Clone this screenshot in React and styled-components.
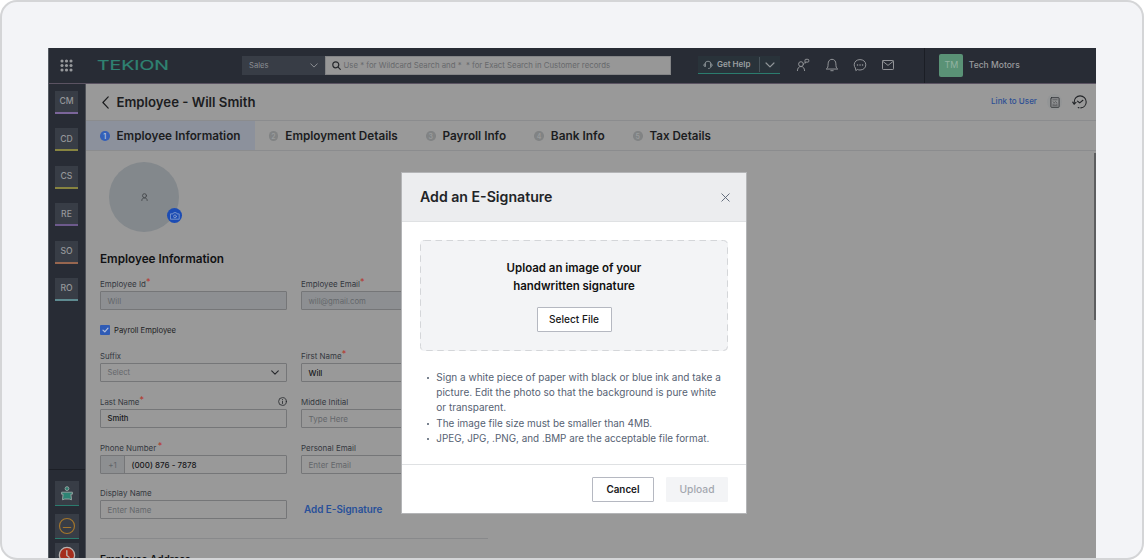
import React from 'react';
import styled, { createGlobalStyle } from 'styled-components';

const GlobalStyle = createGlobalStyle`
  *, *::before, *::after { box-sizing: border-box; }
  body { margin: 0; background: #fff; font-family: Inter, "Liberation Sans", sans-serif; }
  svg { display: block; flex: none; }
`;

const Frame = styled.div`
  width: 1144px;
  height: 560px;
  padding: 46px 0 0 46px;
  background: #f3f4f7;
  border: 2px solid #d4d5d7;
  border-radius: 17px;
  overflow: hidden;
`;

const Window = styled.div`
  position: relative;
  width: 1048px;
  height: 510px;
  display: flex;
  flex-direction: column;
  background: #999;
  overflow: hidden;
`;

const Text = styled.span`
  margin-left: ${(p) => p.$left || 0}px;
  font-size: ${(p) => p.$size}px;
  font-weight: ${(p) => p.$weight || 400};
  color: ${(p) => p.$color || '#1c1d1f'};
  line-height: 1.2;
  white-space: pre;
`;

/* Top bar */
const TopBar = styled.header`
  flex: none;
  height: 36px;
  display: flex;
  align-items: center;
  padding: 0 0 1px 11px;
  background: #282c35;
  border-bottom: 1px solid #5b5362;
  border-left: 1px solid #565c63;
`;
const Logo = styled.svg`
  margin-left: 24px;
  overflow: visible;
`;
const ScopeSelect = styled.div`
  width: 83px;
  height: 19px;
  margin-left: 73px;
  padding: 1px 7px 0;
  display: flex;
  align-items: center;
  justify-content: space-between;
  background: #383d46;
`;
const SearchBox = styled.div`
  width: 346px;
  height: 19px;
  padding: 1px 6px 0;
  display: flex;
  align-items: center;
  gap: 2.5px;
  background: #979797;
  border: 1px solid #838486;
`;
const HelpButton = styled.div`
  width: 82px;
  height: 18px;
  margin-left: 27px;
  padding-left: 5px;
  display: flex;
  align-items: center;
  background: #29333a;
  border-bottom: 1px solid #2b7c6e;
`;
const HelpDivider = styled.div`
  width: 1px;
  height: 15px;
  margin: 0 5px 0 9px;
  background: #47535a;
`;
const TopIcons = styled.div`
  display: flex;
  align-items: center;
  gap: 14.3px;
  margin-left: 16.4px;
  color: #929498;
`;
const Account = styled.div`
  height: 35px;
  display: flex;
  align-items: center;
  gap: 5.5px;
  margin-left: 29px;
  padding-left: 14px;
  border-left: 1px solid #1b1e25;
`;
const AccountBadge = styled.div`
  width: 24px;
  height: 23px;
  display: grid;
  place-items: center;
  border-radius: 2px;
  background: #5a9276;
`;

/* Side rail */
const Body = styled.div`
  flex: 1;
  min-height: 0;
  display: flex;
`;
const Rail = styled.nav`
  flex: none;
  width: 38px;
  display: flex;
  flex-direction: column;
  background: #282c35;
  border-left: 1px solid #565c63;
  border-right: 1px solid #4e5158;
`;
const RailGroup = styled.div`
  flex: none;
  height: 386px;
  padding: 7px 0 0 6px;
  display: flex;
  flex-direction: column;
  gap: 14.4px;
  border-bottom: 1px solid #1c1f26;
`;
const RailTile = styled.div`
  width: 23px;
  height: 23px;
  display: grid;
  place-items: center;
  background: #383d46;
  border-bottom: 2px solid ${(p) => p.$line};
`;
const RailTools = styled.div`
  flex: none;
  padding: 11px 0 0 6px;
  display: flex;
  flex-direction: column;
`;
const RailTool = styled.div`
  flex: none;
  width: 24px;
  height: 25px;
  margin-bottom: ${(p) => p.$gap || 0}px;
  display: grid;
  place-items: center;
  background: #383d46;
  border-bottom: 1px solid #2b7c6e;
`;

/* Page */
const Page = styled.main`
  flex: 1;
  min-width: 0;
  display: flex;
  flex-direction: column;
`;
const TitleBar = styled.div`
  flex: none;
  height: 37px;
  padding: 0 9px 0 16px;
  display: flex;
  align-items: center;
  border-bottom: 1px solid #8b8c8e;
`;
const PageTitle = styled.h1`
  margin: 0 0 1px 7.5px;
  font-size: 13.19px;
  font-weight: 600;
  line-height: 16px;
  color: #1c1d1f;
`;
const TitleActions = styled.div`
  margin-left: auto;
  display: flex;
  align-items: center;
  gap: 10px;
`;
const RoundIcon = styled.div`
  width: 15px;
  height: 16px;
  display: grid;
  place-items: center;
  border-radius: 50%;
  background: #939596;
`;
const Tabs = styled.div`
  flex: none;
  height: 30px;
  display: flex;
  border-bottom: 1px solid #8b8c8e;
`;
const Tab = styled.div`
  display: flex;
  align-items: center;
  gap: 7px;
  padding: 1px 14.3px 0 14px;
  background: ${(p) => (p.$active ? '#8c919c' : 'transparent')};
`;
const TabLabel = styled.span`
  font-size: ${(p) => p.$size}px;
  font-weight: 600;
  line-height: 14px;
  white-space: pre;
  color: #1c1d1f;
`;
const TabNumber = styled.span`
  width: 9.5px;
  height: 9.5px;
  display: grid;
  place-items: center;
  border-radius: 50%;
  background: ${(p) => (p.$active ? '#3560b8' : '#818384')};
  color: ${(p) => (p.$active ? '#b4c0dc' : '#999b9c')};
  font-size: 7px;
  font-weight: 600;
  line-height: 1;
`;
const Scroller = styled.div`
  flex: 1;
  min-height: 0;
  display: flex;
  justify-content: space-between;
`;
const ScrollThumb = styled.div`
  width: 2px;
  height: 167px;
  margin-top: 2px;
  background: #5d5e60;
`;
const Form = styled.div`
  width: 402px;
  padding: 11px 0 0 14px;
`;
const Avatar = styled.div`
  position: relative;
  width: 70px;
  height: 70px;
  margin-left: 9px;
  display: grid;
  place-items: center;
  border-radius: 50%;
  background: #83888c;
`;
const CameraBadge = styled.div`
  position: absolute;
  right: -3px;
  bottom: 9px;
  width: 15px;
  height: 15px;
  display: grid;
  place-items: center;
  border-radius: 50%;
  background: #1c4cb4;
`;
const SectionTitle = styled.h2`
  margin: ${(p) => p.$top}px 0 0;
  font-size: ${(p) => p.$size}px;
  font-weight: 600;
  line-height: 14px;
  color: #111214;
`;
const Row = styled.div`
  display: grid;
  grid-template-columns: 187px 187px;
  column-gap: 14px;
  margin-top: ${(p) => p.$top}px;
`;
const Label = styled.div`
  height: 14px;
  display: flex;
  align-items: center;
  white-space: pre;
  font-size: ${(p) => p.$size || 7.95}px;
  color: #34383f;
  & > svg { margin-left: auto; position: relative; top: -1px; }
`;
const Star = styled.sup`
  align-self: flex-start;
  margin-left: ${(p) => p.$gap || 0}px;
  font-size: 9px;
  line-height: 9px;
  color: #b5332a;
`;
const Input = styled.div`
  height: 19px;
  display: flex;
  align-items: center;
  border: 1px solid #757678;
  border-radius: 1px;
  background: ${(p) => (p.$disabled ? '#8d8f92' : 'transparent')};
`;
const Value = styled.span`
  padding-left: 6.5px;
  font-size: ${(p) => p.$size || 7.95}px;
  font-weight: ${(p) => (p.$filled ? 500 : 400)};
  color: ${(p) => (p.$filled ? '#17181a' : '#64676b')};
`;
const Caret = styled.span`margin: 0 7.5px 0 auto;`;
const DialCode = styled.span`
  width: 24px;
  height: 17px;
  display: grid;
  place-items: center;
  font-size: 7.9px;
  color: #606468;
  background: #8d8f91;
  border-right: 1px solid #757678;
`;
const CheckLine = styled.div`
  height: 10px;
  margin-top: 15px;
  display: flex;
  align-items: center;
  gap: 4px;
`;
const CheckLabel = styled.span`
  padding-top: 1px;
  font-size: 7.66px;
  line-height: 10px;
  color: #1c1d1f;
`;
const CheckBox = styled.span`
  width: 10px;
  height: 10px;
  display: grid;
  place-items: center;
  border-radius: 1px;
  background: #2f5bb5;
`;
const LinkCell = styled.div`
  height: 33px;
  padding: 17px 0 0 3px;
  line-height: 12px;
  font-size: 9.89px;
`;
const Rule = styled.div`
  height: 1px;
  margin-top: 19px;
  background: #88898b;
`;

/* Dialog */
const Overlay = styled.div`
  position: absolute;
  inset: 0;
  padding: 124px 0 0 353px;
`;
const Dialog = styled.section`
  width: 346px;
  height: 342px;
  display: flex;
  flex-direction: column;
  background: #fff;
  border: 1px solid #b4b5b7;
`;
const DialogHead = styled.div`
  flex: none;
  height: 49px;
  padding: 0 16.5px 0 18px;
  display: flex;
  align-items: center;
  justify-content: space-between;
  background: #ecedef;
  border-bottom: 1px solid #dfe1e3;
`;
const DialogBody = styled.div`
  flex: 1;
  padding: 18px 18px 0 18px;
`;
const DropZone = styled.div`
  position: relative;
  height: 111px;
  padding-top: 18.7px;
  display: flex;
  flex-direction: column;
  align-items: center;
  background: #f3f4f6;
  border-radius: 4px;
  text-align: center;
`;
const DropOutline = styled.svg`
  position: absolute;
  inset: 0;
`;
const DropLine = styled.div`
  font-size: 11.46px;
  font-weight: 600;
  line-height: 18.4px;
  color: #111;
`;
const Button = styled.button`
  width: ${(p) => p.$width}px;
  height: 25px;
  margin: ${(p) => p.$top || 0}px 0 0;
  padding: 0 0 1px;
  font: ${(p) => p.$weight || 500} ${(p) => p.$size}px Inter, "Liberation Sans", sans-serif;
  color: ${(p) => (p.$muted ? '#a3a7af' : '#17181a')};
  background: ${(p) => (p.$muted ? '#f3f4f6' : '#fff')};
  border: 1px solid ${(p) => (p.$muted ? '#f3f4f6' : '#b5b8c1')};
  border-radius: 1px;
`;
const Notes = styled.ul`
  margin: 18.8px 0 0;
  padding: 0 0 0 16.3px;
  list-style: none;
`;
const Note = styled.li`
  position: relative;
  font-size: ${(p) => p.$size}px;
  line-height: 15.25px;
  color: #566273;
  white-space: pre;
  &::before {
    content: '';
    position: absolute;
    left: -9.5px;
    top: 7px;
    width: 2.6px;
    height: 2.6px;
    border-radius: 50%;
    background: #4e5a6b;
  }
`;
const DialogFoot = styled.div`
  flex: none;
  height: 49px;
  padding: 11.5px 18px 0 0;
  display: flex;
  justify-content: flex-end;
  gap: 12px;
  border-top: 1px solid #dfe1e3;
`;

const Svg = ({ w, h, vb, sw = 1, color = 'currentColor', children }) => (
  <svg width={w} height={h} viewBox={vb || `0 0 ${w} ${h}`} fill="none" stroke={color} strokeWidth={sw} strokeLinecap="round" strokeLinejoin="round">
    {children}
  </svg>
);

const GridIcon = () => (
  <svg width="13" height="13" viewBox="0 0 13 13" fill="#97999c">
    {[2, 6.5, 11].map((y) => [2, 6.5, 11].map((x) => <circle key={`${x}-${y}`} cx={x} cy={y} r="1.55" />))}
  </svg>
);
const Chevron = ({ color, w = 8, sw = 1 }) => (
  <Svg w={w} h={w / 2 + 1} vb="0 0 8 5" sw={sw} color={color}><path d="M.7.8 4 4.1 7.3.8" /></Svg>
);
const SearchIcon = () => (
  <Svg w={9} h={9} sw={1.2} color="#26282c"><circle cx="3.8" cy="3.8" r="3" /><path d="M6.1 6.1 8.3 8.3" /></Svg>
);
const HeadsetIcon = () => (
  <Svg w={10} h={10} sw={0.9} color="#8d9598">
    <path d="M2 6.3V4.2a3 3 0 0 1 6 0v2.1c0 1.4-1 2.2-2.4 2.2M2 3.8c-1.8.2-1.8 2.5 0 2.7zM8 3.8c1.8.2 1.8 2.5 0 2.7z" />
  </Svg>
);
const PeopleIcon = () => (
  <Svg w={14} h={14}>
    <circle cx="5" cy="6.1" r="2.4" />
    <path d="M1.4 12.6c.1-2.4 1.4-4.1 3.6-4.1s3.5 1.7 3.6 4.1M9 5V2.2q0-.9.9-.9h2q.9 0 .9.9v1q0 .9-.9.9h-1.7z" />
  </Svg>
);
const BellIcon = () => (
  <Svg w={14} h={14}>
    <path d="M1.6 10.8c1.2-.9 1.5-2 1.5-4.9C3.1 3.2 4.7 1.3 7 1.3s3.9 1.9 3.9 4.6c0 2.9.3 4 1.5 4.9zM5.8 12.7h2.4" />
  </Svg>
);
const ChatIcon = () => (
  <Svg w={14} h={14}>
    <path d="M2.8 12.3 2.4 10a5 5 0 0 1-1.2-3.2C1.2 3.7 3.7 1.6 7 1.6s5.8 2.1 5.8 5.2S10.3 12 7 12c-.9 0-1.6-.1-2.3-.4z" />
    <path d="M4.5 6.9h.1M7 6.9h.1M9.5 6.9h.1" strokeWidth="1.5" />
  </Svg>
);
const MailIcon = () => (
  <Svg w={14} h={14}><rect x="1.5" y="2.5" width="11" height="9" rx=".7" /><path d="m1.9 3.4 5.1 4 5.1-4" /></Svg>
);
const DocIcon = () => (
  <Svg w={10} h={11} sw={0.9} color="#303236">
    <rect x=".9" y=".7" width="8.2" height="9.6" rx=".6" />
    <path d="M2.8 2.8h4.4M3 4.8l1.2.9 1.2-1 1.4.9M2.8 7.2h1.6M5.8 7.2h1.4M2.8 8.7h4.4" strokeWidth=".55" />
  </Svg>
);
const HistoryIcon = () => (
  <Svg w={15} h={14} sw={1.1} color="#222427">
    <path d="M2.2 8.8V7.2C2.2 3.6 4.7.9 8.1.9c3.4 0 6.1 2.6 6.1 6 0 3.1-2.3 5.6-5.4 6M7 12.8l-.8-.2" />
    <path d="M.7 7.1 2.2 9.2 4 7.4" /><path d="m5.6 6.2 2.1 1.7 3.2-2.6" />
  </Svg>
);
const PersonIcon = () => (
  <Svg w={7} h={8} sw={0.9} color="#45484c">
    <circle cx="3.5" cy="2.7" r="2" /><path d="M.8 7.5c0-1.6.9-2.5 2.7-2.5s2.7.9 2.7 2.5" />
  </Svg>
);
const CameraIcon = () => (
  <Svg w={10} h={8} sw={0.8} color="#8ba2d0">
    <path d="M.8 1.9h2.2L3.7.7h2.6L7 1.9h2.2v5.3H.8z" /><circle cx="5" cy="4.4" r="1.4" />
  </Svg>
);
const InfoIcon = () => (
  <Svg w={9} h={9} sw={0.8} color="#25272b"><circle cx="4.5" cy="4.5" r="3.9" /><path d="M4.5 4.2v2.3M4.5 2.5v.1" /></Svg>
);
const DeskIcon = () => (
  <svg width="14" height="15" viewBox="0 0 14 15" fill="none" stroke="#92a19f" strokeWidth="1">
    <circle cx="7" cy="2.6" r="1.9" fill="#2e7f70" />
    <path d="M1.6 6.2h10.8v2h-1.5l.6 5.6-2.3-.8H4.8l-2.3.8.6-5.600H1.600z" fill="#2e8474" />
  </svg>
);
const FaceIcon = () => (
  <Svg w={18} h={18} sw={1.2} color="#a3752c"><circle cx="9" cy="9" r="7.5" /><path d="M5.3 10.5h7.4" /></Svg>
);
const ClockIcon = () => (
  <svg width="18" height="18" viewBox="0 0 18 18" fill="none" stroke="#b9b3b0" strokeLinecap="round">
    <circle cx="9" cy="9" r="7.6" fill="#a52e1d" strokeWidth="1.3" /><path d="M8.8 4.8v4.7l2.3 1.7" strokeWidth="1.4" />
  </svg>
);

const modules = [
  ['CM', '#7b659a'], ['CD', '#878440'], ['CS', '#878440'],
  ['RE', '#6d5a8c'], ['SO', '#97664f'], ['RO', '#5e8a90'],
];
const tabs = [
  ['Employee Information', 11.74], ['Employment Details', 11.72], ['Payroll Info', 11.75],
  ['Bank Info', 11.9], ['Tax Details', 11.6],
];

function Field({ label, labelSize, starGap, required, info, value, size, filled, disabled, select, dial }) {
  return (
    <div>
      <Label $size={labelSize}>
        {label}{required && <Star $gap={starGap}>*</Star>}
        {info && <InfoIcon />}
      </Label>
      <Input $disabled={disabled}>
        {dial && <DialCode>{dial}</DialCode>}
        <Value $size={size} $filled={filled}>{value}</Value>
        {select && <Caret><Chevron color="#26282c" sw={1.1} /></Caret>}
      </Input>
    </div>
  );
}

function SignatureDialog() {
  return (
    <Overlay>
      <Dialog>
        <DialogHead>
          <Text $size={14.13} $weight={600} $color="#222427">Add an E-Signature</Text>
          <Svg w={9} h={9} sw={0.9} color="#566170"><path d="m.8.8 7.4 7.4M8.2.8.8 8.2" /></Svg>
        </DialogHead>
        <DialogBody>
          <DropZone>
            <DropOutline width="308" height="111">
              <rect x=".5" y=".5" width="307" height="110" rx="4" fill="none" stroke="#d4d6d9" strokeDasharray="6.5 4.5" />
            </DropOutline>
            <DropLine>Upload an image of your</DropLine>
            <DropLine>handwritten signature</DropLine>
            <Button $width={75} $size={10.13} $top={11.5}>Select File</Button>
          </DropZone>
          <Notes>
            <Note $size={10.02}>{'Sign a white piece of paper with black or blue ink and take a\npicture. Edit the photo so that the background is pure white\nor transparent.'}</Note>
            <Note $size={9.93}>The image file size must be smaller than 4MB.</Note>
            <Note $size={9.89}>JPEG, JPG, .PNG, and .BMP are the acceptable file format.</Note>
          </Notes>
        </DialogBody>
        <DialogFoot>
          <Button $width={62} $size={9.83} $weight={600}>Cancel</Button>
          <Button $width={62} $size={10.26} $muted>Upload</Button>
        </DialogFoot>
      </Dialog>
    </Overlay>
  );
}

export default function App() {
  return (
    <>
      <GlobalStyle />
      <Frame>
        <Window>
          <TopBar>
            <GridIcon />
            <Logo width="72" height="16">
              <text x="0" y="12.8" fontFamily="Inter, sans-serif" fontSize="12.5" fontWeight="400" fill="#2f8272" stroke="#2f8272" strokeWidth=".2" textLength="72" lengthAdjust="spacingAndGlyphs">TEKION</text>
            </Logo>
            <ScopeSelect>
              <Text $size={7.63} $color="#8b8e93">Sales</Text>
              <Chevron color="#8b8e93" />
            </ScopeSelect>
            <SearchBox>
              <SearchIcon />
              <Text $size={7.81} $color="#67696c">Use * for Wildcard Search and *  * for Exact Search in Customer records</Text>
            </SearchBox>
            <HelpButton>
              <HeadsetIcon />
              <Text $size={8.04} $weight={600} $color="#9a9fa1" $left={4}>Get Help</Text>
              <HelpDivider />
              <Chevron color="#8f9598" w={10} />
            </HelpButton>
            <TopIcons><PeopleIcon /><BellIcon /><ChatIcon /><MailIcon /></TopIcons>
            <Account>
              <AccountBadge><Text $size={8.9} $color="#92b3a2">TM</Text></AccountBadge>
              <Text $size={8.52} $weight={500} $color="#9a9b9e">Tech Motors</Text>
            </Account>
          </TopBar>
          <Body>
            <Rail>
              <RailGroup>
                {modules.map(([name, line]) => (
                  <RailTile key={name} $line={line}><Text $size={8.6} $weight={500} $color="#95979a">{name}</Text></RailTile>
                ))}
              </RailGroup>
              <RailTools>
                <RailTool $gap={8}><DeskIcon /></RailTool>
                <RailTool $gap={4}><FaceIcon /></RailTool>
                <RailTool><ClockIcon /></RailTool>
              </RailTools>
            </Rail>
            <Page>
              <TitleBar>
                <Svg w={7} h={13} sw={1.2} color="#1c1d1f"><path d="M6.2.9.9 6.5l5.3 5.6" /></Svg>
                <PageTitle>Employee - Will Smith</PageTitle>
                <TitleActions>
                  <Text $size={8.07} $weight={500} $color="#2d4f94">Link to User</Text>
                  <RoundIcon><DocIcon /></RoundIcon>
                  <HistoryIcon />
                </TitleActions>
              </TitleBar>
              <Tabs>
                {tabs.map(([name, size], i) => (
                  <Tab key={name} $active={i === 0}>
                    <TabNumber $active={i === 0}>{i + 1}</TabNumber>
                    <TabLabel $size={size}>{name}</TabLabel>
                  </Tab>
                ))}
              </Tabs>
              <Scroller>
                <Form>
                  <Avatar>
                    <PersonIcon />
                    <CameraBadge><CameraIcon /></CameraBadge>
                  </Avatar>
                  <SectionTitle $top={20} $size={11.74}>Employee Information</SectionTitle>
                  <Row $top={11}>
                    <Field label="Employee Id" required value="Will" disabled />
                    <Field label="Employee Email" required value="will@gmail.com" size={7.79} disabled />
                  </Row>
                  <CheckLine>
                    <CheckBox><Svg w={7} h={6} sw={1.2} color="#b4c0dc"><path d="M1 3.1 2.8 4.8 6 1.2" /></Svg></CheckBox>
                    <CheckLabel>Payroll Employee</CheckLabel>
                  </CheckLine>
                  <Row $top={14}>
                    <Field label="Suffix" labelSize={7.71} value="Select" size={7.63} select />
                    <Field label="First Name" required value="Will" size={7.89} filled />
                  </Row>
                  <Row $top={13}>
                    <Field label="Last Name" labelSize={7.84} required info value="Smith" size={7.7} filled />
                    <Field label="Middle Initial" value="Type Here" size={8.08} />
                  </Row>
                  <Row $top={13}>
                    <Field label="Phone Number" required starGap={1.5} dial="+1" value="(000) 876 - 7878" size={8} filled />
                    <Field label="Personal Email" value="Enter Email" size={8.06} />
                  </Row>
                  <Row $top={12}>
                    <Field label="Display Name" value="Enter Name" />
                    <LinkCell><Text $size={9.89} $weight={600} $color="#28509a">Add E-Signature</Text></LinkCell>
                  </Row>
                  <Rule />
                  <SectionTitle $top={13} $size={10.04}>Employee Address</SectionTitle>
                </Form>
                <ScrollThumb />
              </Scroller>
            </Page>
          </Body>
          <SignatureDialog />
        </Window>
      </Frame>
    </>
  );
}
